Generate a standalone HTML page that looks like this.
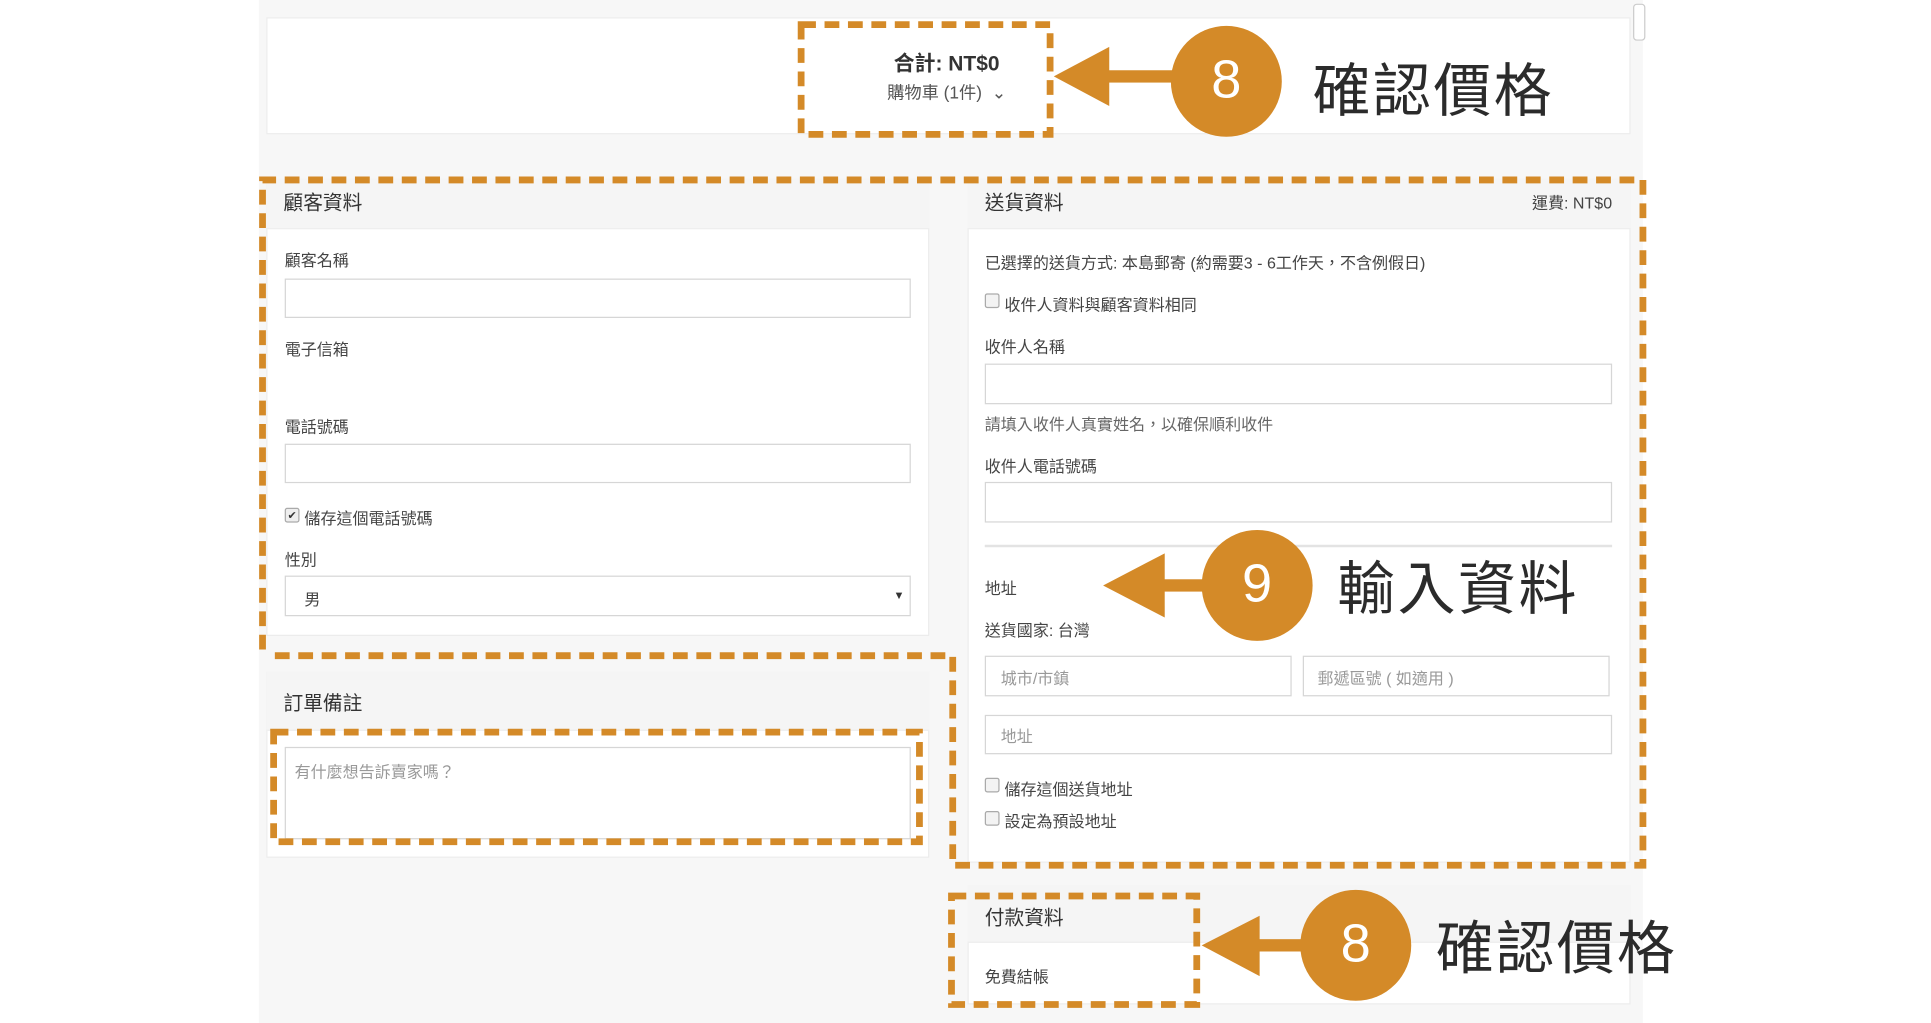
<!DOCTYPE html>
<html><head><meta charset="utf-8"><style>
html,body{margin:0;padding:0;background:#fff;width:1931px;height:1023px;overflow:hidden}
#w{position:absolute;left:0;top:0;width:1567px;height:830px;transform:scale(1.2325);transform-origin:0 0;font-family:"Liberation Sans","Noto Sans CJK TC",sans-serif;color:#333}
.a{position:absolute}
.bg{left:210px;top:0;width:1123px;height:830px;background:#f7f7f7}
.card{background:#fff;border:1px solid #ececec;box-sizing:border-box}
.hd{background:#f5f5f5;border-bottom:1px solid #eee;box-sizing:border-box}
.t{font-size:16px;white-space:nowrap}
.l{font-size:13px;white-space:nowrap;color:#444}
.in{background:#fff;border:1px solid #d6d6d6;box-sizing:border-box}
.ph{font-size:13px;color:#999;white-space:nowrap}
.cb{width:10px;height:10px;border:1px solid #aaa;border-radius:2px;background:#f3f3f3}
.big{font-size:47px;color:#2b2b2b;white-space:nowrap;letter-spacing:2px}
.num{color:#fff;font-size:44px;text-align:center}
</style></head><body><div id="w">
<div class="a bg"></div>
<div class="a" style="left:1325px;top:3px;width:8px;height:28px;border:1px solid #ccc;border-radius:3px;background:#fff"></div>
<div class="a card" style="left:216px;top:14px;width:1107px;height:95px"></div>
<div class="a" style="left:680px;top:37px;width:176px;text-align:center;font-weight:bold;font-size:17px">合計: NT$0</div>
<div class="a" style="left:680px;top:65px;width:176px;text-align:center;font-size:14px;color:#555">購物車 (1件) &nbsp;⌄</div>

<div class="a card" style="left:216px;top:145px;width:538px;height:371px"></div>
<div class="a hd" style="left:216px;top:145px;width:538px;height:41px"></div>
<div class="a t" style="left:230px;top:151px">顧客資料</div>
<div class="a l" style="left:231px;top:201px">顧客名稱</div>
<div class="a in" style="left:231px;top:226px;width:508px;height:32px"></div>
<div class="a l" style="left:231px;top:273px">電子信箱</div>
<div class="a l" style="left:231px;top:336px">電話號碼</div>
<div class="a in" style="left:231px;top:360px;width:508px;height:32px"></div>
<div class="a cb" style="left:231px;top:412px;background:#eee;font-size:9px;line-height:10px;text-align:center">✔</div>
<div class="a l" style="left:247px;top:410px">儲存這個電話號碼</div>
<div class="a l" style="left:231px;top:444px">性別</div>
<div class="a in" style="left:231px;top:467px;width:508px;height:33px"></div>
<div class="a l" style="left:247px;top:476px">男</div>
<div class="a" style="left:725px;top:478px;font-size:9px">▼</div>

<div class="a card" style="left:216px;top:545px;width:538px;height:151px"></div>
<div class="a hd" style="left:216px;top:545px;width:538px;height:48px"></div>
<div class="a t" style="left:230px;top:557px">訂單備註</div>
<div class="a in" style="left:231px;top:606px;width:508px;height:75px"></div>
<div class="a ph" style="left:239px;top:616px">有什麼想告訴賣家嗎？</div>

<div class="a card" style="left:785px;top:145px;width:538px;height:555px"></div>
<div class="a hd" style="left:785px;top:145px;width:538px;height:41px"></div>
<div class="a t" style="left:799px;top:151px">送貨資料</div>
<div class="a l" style="left:1238px;top:154px;width:70px;text-align:right">運費: NT$0</div>
<div class="a l" style="left:799px;top:203px">已選擇的送貨方式: 本島郵寄 (約需要3 - 6工作天，不含例假日)</div>
<div class="a cb" style="left:799px;top:238px"></div>
<div class="a l" style="left:815px;top:237px">收件人資料與顧客資料相同</div>
<div class="a l" style="left:799px;top:271px">收件人名稱</div>
<div class="a in" style="left:799px;top:295px;width:509px;height:33px"></div>
<div class="a l" style="left:799px;top:334px;color:#666">請填入收件人真實姓名，以確保順利收件</div>
<div class="a l" style="left:799px;top:368px">收件人電話號碼</div>
<div class="a in" style="left:799px;top:391px;width:509px;height:33px"></div>
<div class="a" style="left:799px;top:442px;width:509px;height:2px;background:#e3e3e3"></div>
<div class="a l" style="left:799px;top:467px">地址</div>
<div class="a l" style="left:799px;top:501px">送貨國家: 台灣</div>
<div class="a in" style="left:799px;top:532px;width:249px;height:33px"></div>
<div class="a ph" style="left:812px;top:540px">城市/市鎮</div>
<div class="a in" style="left:1057px;top:532px;width:249px;height:33px"></div>
<div class="a ph" style="left:1069px;top:540px">郵遞區號 ( 如適用 )</div>
<div class="a in" style="left:799px;top:580px;width:509px;height:32px"></div>
<div class="a ph" style="left:812px;top:587px">地址</div>
<div class="a cb" style="left:799px;top:631px"></div>
<div class="a l" style="left:815px;top:630px">儲存這個送貨地址</div>
<div class="a cb" style="left:799px;top:658px"></div>
<div class="a l" style="left:815px;top:656px">設定為預設地址</div>

<div class="a card" style="left:785px;top:718px;width:538px;height:97px"></div>
<div class="a hd" style="left:785px;top:718px;width:538px;height:47px"></div>
<div class="a t" style="left:799px;top:731px">付款資料</div>
<div class="a l" style="left:799px;top:782px">免費結帳</div>

<svg class="a" style="left:0;top:0" width="1567" height="830">
<g fill="none" stroke="#d48a28" stroke-width="5.5" stroke-dasharray="12 7">
<rect x="650" y="20" width="202" height="89"/>
<polyline points="213,527 213,146 1333,146 1333,702 773,702 773,532 216,532"/>
<rect x="222" y="594" width="524" height="89"/>
<rect x="772" y="727" width="199" height="88"/>
</g>
<g fill="#d48a28">
<polygon points="855,62 900,38 900,86"/><rect x="898" y="57" width="60" height="10"/><circle cx="995" cy="66" r="45"/>
<polygon points="895,475 945,449 945,501"/><rect x="943" y="470" width="40" height="10"/><circle cx="1020" cy="475" r="45"/>
<polygon points="975,767 1022,743 1022,792"/><rect x="1020" y="762" width="40" height="10"/><circle cx="1100" cy="767" r="45"/>
</g>
</svg>
<div class="a num" style="left:950px;top:40px;width:90px">8</div>
<div class="a num" style="left:975px;top:449px;width:90px">9</div>
<div class="a num" style="left:1055px;top:741px;width:90px">8</div>
<div class="a big" style="left:1065px;top:35px">確認價格</div>
<div class="a big" style="left:1085px;top:439px">輸入資料</div>
<div class="a big" style="left:1165px;top:731px">確認價格</div>
</div></body></html>
